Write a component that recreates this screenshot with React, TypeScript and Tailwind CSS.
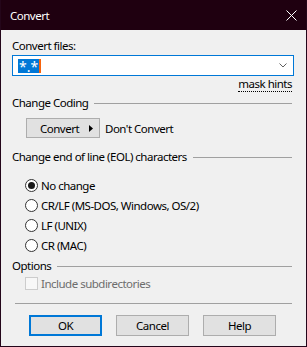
import React from "react";

function Radio({ checked, label }: { checked?: boolean; label: string }) {
  return (
    <div className="flex items-center h-[20px] pl-[13px]">
      <div className="w-[13px] h-[13px] rounded-full border border-[#333333] bg-white flex items-center justify-center">
        {checked && <div className="w-[7px] h-[7px] rounded-full bg-[#1a1a1a]" />}
      </div>
      <span className="ml-[3px] text-[11.5px] leading-[15px] text-black">{label}</span>
    </div>
  );
}

function GroupHeader({ label }: { label: string }) {
  return (
    <div className="flex items-center h-[15px] pr-[2px]">
      <span className="text-[11.5px] leading-[15px] text-black whitespace-nowrap">{label}</span>
      <div className="flex-1 h-px bg-[#a0a0a0] ml-[6px] mt-[1px]" />
    </div>
  );
}

function Btn({ label, def }: { label: string; def?: boolean }) {
  return (
    <div
      className={
        def
          ? "w-[73px] h-[21px] flex items-center justify-center bg-[#e1e1e1] text-[11.5px] leading-[15px] text-black border-2 border-[#0078d7]"
          : "w-[73px] h-[21px] flex items-center justify-center bg-[#e1e1e1] text-[11.5px] leading-[15px] text-black border border-[#adadad]"
      }
    >
      {label}
    </div>
  );
}

export default function App() {
  return (
    <div className="w-[307px] h-[347px] bg-[#f0f0f0] border-x border-b border-[#24061a] flex flex-col overflow-hidden font-['Noto_Sans','Liberation_Sans',sans-serif] tracking-[-0.5px]">
      <div className="h-[30px] bg-[#1f0010] flex items-center justify-between pl-[9px] pr-[9px] shrink-0">
        <span className="text-white text-[11.5px] leading-[15px] mt-[1px]">Convert</span>
        <svg width="11" height="11" viewBox="0 0 11 11">
          <path d="M0.5 0.5 L10.5 10.5 M10.5 0.5 L0.5 10.5" stroke="#ffffff" strokeWidth="1" />
        </svg>
      </div>

      <div className="flex flex-col pl-[11px] pr-[12px]">
        <div className="mt-[8px] text-[11.5px] leading-[15px] text-black">Convert files:</div>
        <div className="mt-[2px] h-[21px] border border-[#0078d7] bg-white flex items-center pl-[5px] pr-[6px]">
          <div className="flex items-center h-[14px]">
            <span className="bg-[#0078d7] text-white text-[14px] leading-[14px] h-[14px] px-[1px] tracking-[0px] flex items-center">
              <span className="mt-[3px]">*.*</span>
            </span>
            <div className="w-[2px] h-[14px] bg-[#f7630c]" />
          </div>
          <div className="flex-1" />
          <svg width="8" height="5" viewBox="0 0 8 5">
            <path d="M0.5 0.5 L4 4 L7.5 0.5" stroke="#606060" strokeWidth="1" fill="none" />
          </svg>
        </div>
        <div className="mt-[1px] flex justify-end pr-[2px]">
          <span className="text-[11.5px] leading-[14px] text-black border-b border-dotted border-black">mask hints</span>
        </div>

        <div className="mt-[3px]">
          <GroupHeader label="Change Coding" />
        </div>

        <div className="mt-[8px] flex items-center pl-[14px]">
          <div className="w-[74px] h-[20px] bg-[#e1e1e1] border border-[#adadad] flex items-center pl-[13px]">
            <span className="text-[11.5px] leading-[15px] text-black">Convert</span>
            <svg width="4" height="7" viewBox="0 0 4 7" className="ml-[10px]">
              <path d="M0 0 L4 3.5 L0 7 Z" fill="#000000" />
            </svg>
          </div>
          <span className="ml-[5px] text-[11.5px] leading-[15px] text-black">Don't Convert</span>
        </div>

        <div className="mt-[11px]">
          <GroupHeader label="Change end of line (EOL) characters" />
        </div>

        <div className="mt-[11px] flex flex-col">
          <Radio checked label="No change" />
          <Radio label="CR/LF (MS-DOS, Windows, OS/2)" />
          <Radio label="LF (UNIX)" />
          <Radio label="CR (MAC)" />
        </div>

        <div className="mt-[3px]">
          <GroupHeader label="Options" />
        </div>

        <div className="mt-[3px] flex items-center h-[15px] pl-[13px]">
          <div className="w-[13px] h-[13px] border border-[#cccccc] bg-[#f7f7f7]" />
          <span className="ml-[3px] text-[11.5px] leading-[15px] text-[#6d6d6d]">Include subdirectories</span>
        </div>

        <div className="mt-[12px] ml-[3px] mr-[2px] h-px bg-[#a0a0a0]" />

        <div className="mt-[11px] flex pl-[17px] gap-[14px]">
          <Btn label="OK" def />
          <Btn label="Cancel" />
          <Btn label="Help" />
        </div>
      </div>
    </div>
  );
}
